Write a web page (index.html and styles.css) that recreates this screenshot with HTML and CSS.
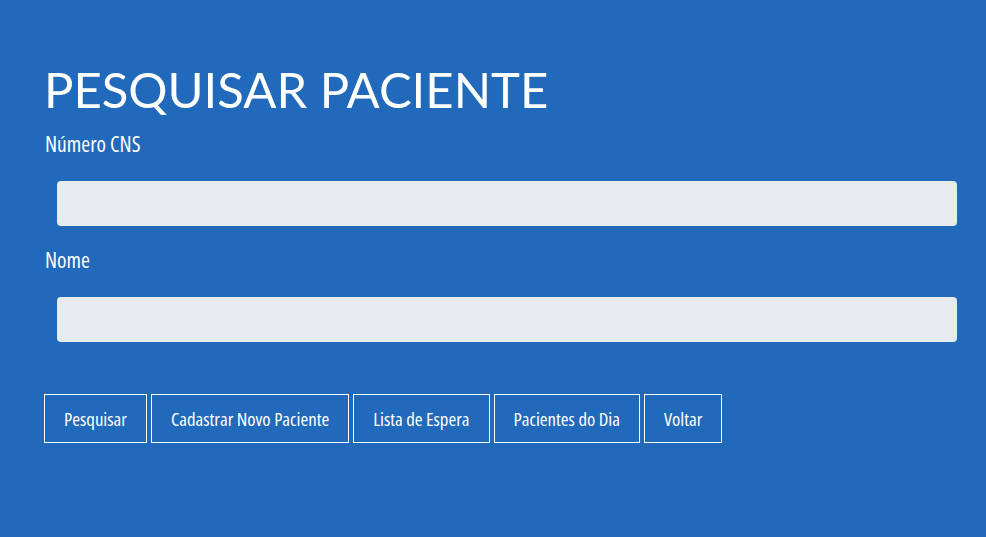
FILE: index.html
```html
<!DOCTYPE html>
<html lang="pt-BR">
<head>
<meta charset="utf-8">
<title>Pesquisar Paciente</title>
<link rel="stylesheet" href="styles.css">
</head>
<body>
<main class="page">
  <h1 class="title">PESQUISAR PACIENTE</h1>
  <form class="form">
    <div class="field">
      <label class="label" for="cns">Número CNS</label>
      <input class="input" id="cns" type="text">
    </div>
    <div class="field">
      <label class="label" for="nome">Nome</label>
      <input class="input" id="nome" type="text" autofocus>
    </div>
    <div class="actions">
      <button class="btn" type="button">Pesquisar</button>
      <button class="btn" type="button">Cadastrar Novo Paciente</button>
      <button class="btn" type="button">Lista de Espera</button>
      <button class="btn" type="button">Pacientes do Dia</button>
      <button class="btn" type="button">Voltar</button>
    </div>
  </form>
</main>
</body>
</html>
```
FILE: styles.css
```css
html, body {
  margin: 0;
  padding: 0;
  background: #2169bb;
  height: 100%;
}
body {
  font-family: "Open Sans", "Liberation Sans", sans-serif;
  color: #fff;
}
.page {
  padding: 61px 29px 0 44px;
}
.title {
  margin: 0;
  font-family: Lato, "Liberation Sans", sans-serif;
  font-weight: 400;
  font-size: 49px;
  line-height: 56px;
  letter-spacing: 0;
}
.form {
  display: flex;
  flex-direction: column;
  margin-top: 13px;
}
.field {
  display: flex;
  flex-direction: column;
}
.label {
  font-family: "Open Sans", sans-serif;
  font-stretch: 75%;
  font-weight: 500;
  font-size: 21.5px;
  line-height: 28px;
  margin-bottom: 23px;
  padding-left: 1px;
}
.field + .field { margin-top: 20px; }
.input {
  margin-left: 13px;
  height: 45px;
  box-sizing: border-box;
  border: none;
  border-radius: 4px;
  background: #e6ebee;
  padding: 0 8px;
  font-size: 16px;
  outline: none;
  caret-color: #000;
}
.actions {
  display: flex;
  gap: 4px;
  margin-top: 52px;
}
.btn {
  height: 49px;
  box-sizing: border-box;
  border: 1px solid #fff;
  background: transparent;
  color: #fff;
  font-family: "Open Sans", sans-serif;
  font-stretch: 75%;
  font-weight: 500;
  font-size: 18.8px;
  padding: 0 19px;
  border-radius: 0;
}
```
